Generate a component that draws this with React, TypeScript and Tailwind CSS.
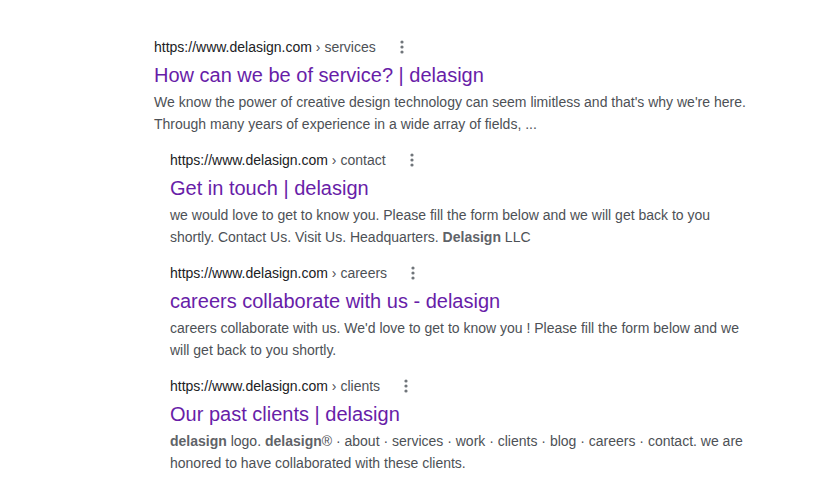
import React from "react";

function Kebab() {
  return (
    <svg width="4" height="16" viewBox="0 0 4 16" className="ml-[24px] shrink-0" aria-hidden>
      <circle cx="2" cy="3" r="1.6" fill="#70757a" />
      <circle cx="2" cy="8" r="1.6" fill="#70757a" />
      <circle cx="2" cy="13" r="1.6" fill="#70757a" />
    </svg>
  );
}

type R = {
  path: string;
  title: string;
  snippet: React.ReactNode;
};

function UrlLine({ path }: { path: string }) {
  return (
    <div className="flex items-center h-[20px] text-[14px] leading-[20px]">
      <span className="text-[#202124]">https://www.delasign.com</span>
      <span className="text-[#4d5156] whitespace-pre"> › {path}</span>
      <Kebab />
    </div>
  );
}

function Result({ r }: { r: R }) {
  return (
    <div>
      <UrlLine path={r.path} />
      <div className="mt-[5px] text-[20px] leading-[26px] text-[#681da8]">{r.title}</div>
      <div className="mt-[3px] text-[14px] leading-[22px] text-[#4d5156]">{r.snippet}</div>
    </div>
  );
}

const B = ({ children }: { children: React.ReactNode }) => (
  <span className="font-bold text-[#5f6368]">{children}</span>
);

export default function App() {
  const main: R = {
    path: "services",
    title: "How can we be of service? | delasign",
    snippet:
      "We know the power of creative design technology can seem limitless and that's why we're here. Through many years of experience in a wide array of fields, ...",
  };
  const subs: R[] = [
    {
      path: "contact",
      title: "Get in touch | delasign",
      snippet: (
        <>
          we would love to get to know you. Please fill the form below and we will get back to you shortly. Contact Us. Visit Us. Headquarters. <B>Delasign</B> LLC
        </>
      ),
    },
    {
      path: "careers",
      title: "careers collaborate with us - delasign",
      snippet:
        "careers collaborate with us. We'd love to get to know you ! Please fill the form below and we will get back to you shortly.",
    },
    {
      path: "clients",
      title: "Our past clients | delasign",
      snippet: (
        <>
          <B>delasign</B> logo. <B>delasign</B>® · about · services · work · clients · blog · careers · contact. we are honored to have collaborated with these clients.
        </>
      ),
    },
  ];
  return (
    <div className="w-[832px] h-[497px] bg-white overflow-hidden font-['Liberation_Sans',Arial,sans-serif]">
      <div className="pl-[154px] pt-[37px] w-[754px]">
        <Result r={main} />
        <div className="ml-[16px] mt-[15px] flex flex-col gap-[15px]">
          {subs.map((s) => (
            <Result key={s.path} r={s} />
          ))}
        </div>
      </div>
    </div>
  );
}
